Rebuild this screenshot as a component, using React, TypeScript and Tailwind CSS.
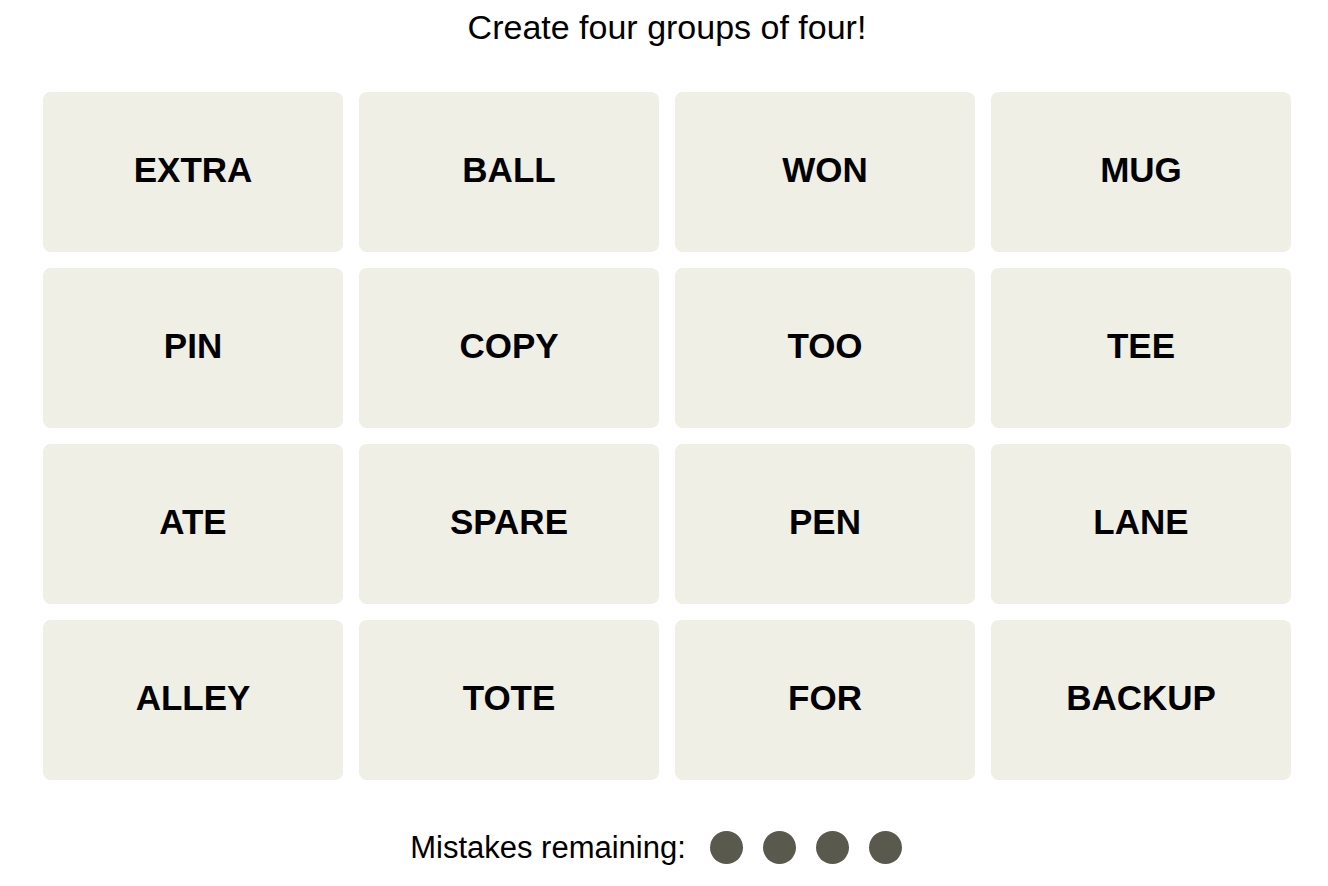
import React from 'react';

const words = [
  'EXTRA', 'BALL', 'WON', 'MUG',
  'PIN', 'COPY', 'TOO', 'TEE',
  'ATE', 'SPARE', 'PEN', 'LANE',
  'ALLEY', 'TOTE', 'FOR', 'BACKUP',
];

export default function App() {
  const [mistakes] = React.useState(4);

  return (
    <div className="min-h-screen bg-white text-black pl-[43px] pr-[37px] pt-[10px] font-['Liberation_Sans',Arial,sans-serif]">
      <h1 className="text-center text-[34px] leading-none font-normal">Create four groups of four!</h1>

      <div className="mt-[48px] grid grid-cols-4 gap-4">
        {words.map((word) => (
          <button
            key={word}
            className="h-[160px] rounded-lg bg-[#efefe6] flex items-center justify-center pb-[5px] text-[35px] leading-none font-bold uppercase cursor-pointer"
          >
            {word}
          </button>
        ))}
      </div>

      <div className="mt-[51px] flex items-center justify-center pr-[22px]">
        <span className="text-[31px] leading-none">Mistakes remaining:</span>
        <div className="ml-[24px] flex items-center gap-[20px]">
          {Array.from({ length: mistakes }).map((_, i) => (
            <span key={i} className="w-[33px] h-[33px] rounded-full bg-[#5a594e]" />
          ))}
        </div>
      </div>
    </div>
  );
}
